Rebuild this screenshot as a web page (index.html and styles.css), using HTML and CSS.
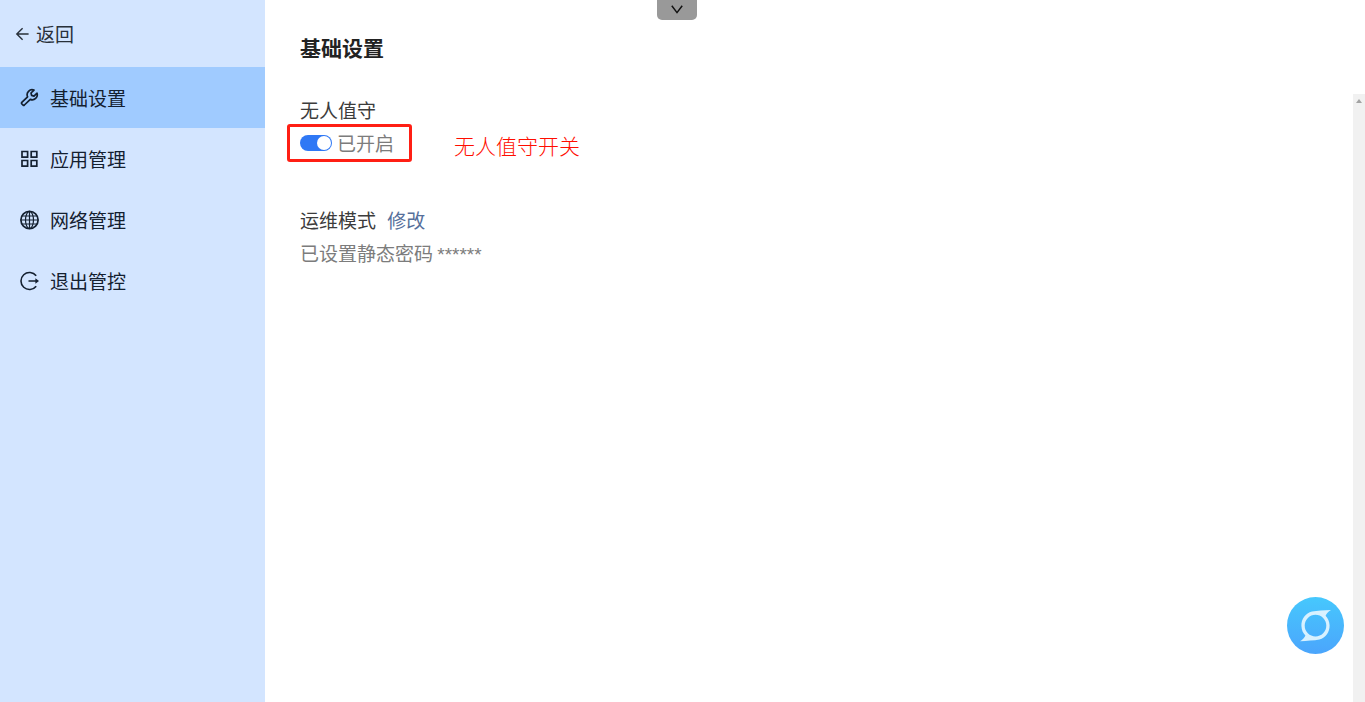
FILE: index.html
```
<!DOCTYPE html>
<html lang="zh-CN">
<head>
    <meta charset="UTF-8">
    <meta name="viewport" content="width=device-width, initial-scale=1.0">
    <title>基础设置</title>
    <link rel="stylesheet" href="styles.css">
</head>
<body>
    <!-- Left menu -->
    <aside class="sidebar">
        <a class="back" href="#">
            <svg width="14" height="14" viewBox="0 0 14 14" fill="none" stroke="currentColor" stroke-width="1.4"><path d="M13.6 7H2.1M7.6 1.2L1.8 7L7.6 12.8"/></svg>
            返回
        </a>
        <nav class="menu">
            <a class="menu-item active" href="#">
                <svg width="20" height="20" viewBox="0 0 20 20" fill="none" stroke="currentColor" stroke-width="1.7" stroke-linejoin="round"><path d="M15 2.1A5 5 0 0 0 8.6 8.8L2.8 14.4Q2.2 15.1 2.8 15.8L4 17Q4.7 17.6 5.4 17L11.3 11.4A5 5 0 0 0 18 5.2L15 8.1L12.6 7.4L12 5Z"/></svg>
                基础设置
            </a>
            <a class="menu-item" href="#">
                <svg width="20" height="20" viewBox="0 0 20 20" fill="none" stroke="currentColor" stroke-width="1.7"><path d="M3 2.5H8.6V8.1H3ZM12.2 2.5H17.8V8.1H12.2ZM3 11.5H8.6V17.1H3ZM12.2 11.5H17.8V17.1H12.2Z"/></svg>
                应用管理
            </a>
            <a class="menu-item" href="#">
                <svg width="20" height="20" viewBox="0 0 20 20" fill="none" stroke="currentColor" stroke-width="1.2"><circle cx="10.5" cy="10" r="8.6" stroke-width="1.7"/><ellipse cx="10.5" cy="10" rx="4" ry="8.6"/><path d="M10.5 1.4V18.6M1.9 10H19.1M3.1 6H17.9M3.1 14H17.9"/></svg>
                网络管理
            </a>
            <a class="menu-item" href="#">
                <svg width="20" height="20" viewBox="0 0 20 20" fill="none" stroke="currentColor" stroke-width="1.6"><path d="M17.2 4.8A8.5 8.5 0 1 0 17.2 15.2M9.5 10H17"/><path d="M16.4 7.2L20 10L16.4 12.8Z" fill="currentColor" stroke="none"/></svg>
                退出管控
            </a>
        </nav>
    </aside>

    <main class="main">
        <h1 class="title">基础设置</h1>
        <div class="scroll-area">
            <div class="content">
                <section class="setting">
                    <h2 class="setting-name">无人值守</h2>
                    <div class="switch-row">
                        <label class="switch-box" for="unattended">
                            <input class="switch" type="checkbox" id="unattended" checked>
                            已开启
                        </label>
                        <span class="note">无人值守开关</span>
                    </div>
                </section>
                <section class="setting">
                    <h2 class="setting-name">运维模式 <a class="edit" href="#">修改</a></h2>
                    <p class="setting-info">已设置静态密码 <span class="stars">******</span></p>
                </section>
            </div>
            <div class="scrollbar">
                <svg width="6" height="4" viewBox="0 0 6 4" fill="#a3a3a3"><path d="M3 0L6 4H0Z"/></svg>
            </div>
        </div>
    </main>

    <!-- Pull-down handle and floating assistant -->
    <button class="pull-down" type="button" aria-label="展开">
        <svg width="12" height="9" viewBox="0 0 12 9" fill="none" stroke="#111" stroke-width="1.5"><path d="M0.8 0.8L6 7.6L11.2 0.8"/></svg>
    </button>
    <button class="assistant" type="button" aria-label="助手">
        <svg width="57" height="57" viewBox="0 0 57 57">
            <path fill="#d8f1ff" fill-rule="evenodd" d="M44 13C37 13.3 30 13.8 25 14.6C18.5 16.3 14.2 22.2 14.4 29C14.6 33 16 36.2 18.4 38.5C17.6 40.8 15.8 42.5 13 44.2C20 44 27 43.6 32.4 42.6C38.8 40.8 42.8 35 42.6 28.2C42.4 24.4 40.9 21.2 38.6 18.8C39.4 16.5 41.2 14.8 44 13ZM28.5 17.8A10.8 10.8 0 1 0 28.5 39.4A10.8 10.8 0 1 0 28.5 17.8Z"/>
        </svg>
    </button>
</body>
</html>
```
FILE: styles.css
```
* {
    box-sizing: border-box;
}

body {
    margin: 0;
    min-height: 100vh;
    display: flex;
    background-color: #fff;
    color: #3c3c3c;
    font-family: "Noto Sans CJK SC", "Liberation Sans", sans-serif;
    font-size: 19px;
    line-height: 28px;
}

a {
    text-decoration: none;
}

svg {
    display: block;
    flex-shrink: 0;
}

/* Left menu */
.sidebar {
    width: 265px;
    flex-shrink: 0;
    background-color: #d3e5ff;
}

.back {
    display: flex;
    align-items: center;
    gap: 7px;
    height: 67px;
    padding-left: 15px;
    color: #28303a;
}

.menu-item {
    display: flex;
    align-items: center;
    gap: 11px;
    height: 61px;
    padding-left: 19px;
    color: #142030;
}

.menu-item.active {
    background-color: #a0cbff;
}

/* Right side */
.main {
    flex: 1;
    display: flex;
    flex-direction: column;
}

.title {
    height: 94px;
    margin: 0;
    padding: 33px 35px 0;
    color: #222;
    font-size: 21px;
    font-weight: bold;
}

.scroll-area {
    flex: 1;
    display: flex;
}

.content {
    flex: 1;
    padding: 2px 35px;
}

.setting {
    margin-bottom: 44px;
}

.setting-name {
    margin: 0;
    font-size: 19px;
    font-weight: normal;
}

.switch-row {
    display: flex;
    align-items: center;
    gap: 42px;
    margin-left: -13px;
}

.switch-box {
    display: flex;
    align-items: center;
    gap: 5px;
    height: 38px;
    padding: 0 15px 0 10px;
    border: 3px solid #ff1f14;
    border-radius: 3px;
    color: #7c7c7c;
}

.switch {
    appearance: none;
    display: flex;
    align-items: center;
    justify-content: flex-end;
    width: 32px;
    height: 16px;
    margin: 0;
    padding: 1px;
    border-radius: 8px;
    background-color: #2f78f5;
    cursor: pointer;
}

.switch::before {
    content: "";
    width: 14px;
    height: 14px;
    border-radius: 50%;
    background-color: #fff;
}

.switch:not(:checked) {
    justify-content: flex-start;
    background-color: #bbb;
}

.note {
    padding-top: 4px;
    color: #ff0d00;
    font-size: 21px;
    font-weight: 300;
}

.edit {
    margin-left: 7px;
    color: #566f9b;
}

.setting-info {
    margin: 5px 0 0;
    color: #7c7c7c;
}

.stars {
    font-family: "Liberation Sans", sans-serif;
}

.scrollbar {
    width: 12px;
    padding: 5px 3px;
    background-color: #f1f1f1;
}

/* Floating controls */
.pull-down {
    position: absolute;
    top: 0;
    left: calc(50% - 26px);
    display: flex;
    justify-content: center;
    width: 40px;
    height: 20px;
    padding: 5px 0 0;
    border: none;
    border-radius: 0 0 5px 5px;
    background-color: #999;
}

.assistant {
    position: fixed;
    right: 21px;
    bottom: 48px;
    width: 57px;
    height: 57px;
    padding: 0;
    border: none;
    border-radius: 50%;
    background: linear-gradient(#46c8fd, #4ba5fc);
}
```
